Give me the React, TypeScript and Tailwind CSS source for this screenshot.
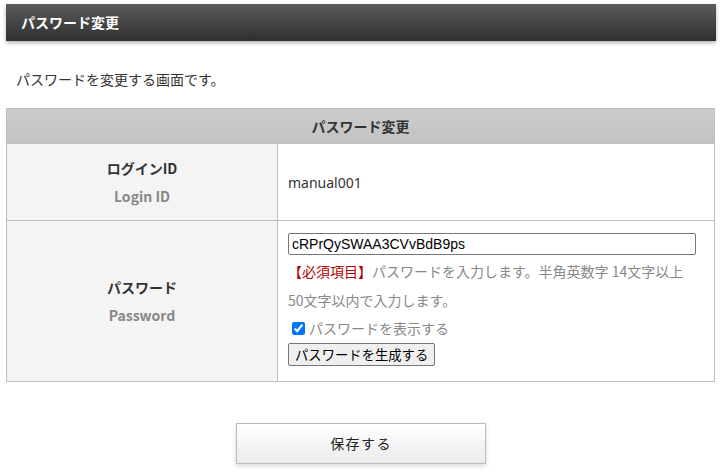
import { useState } from 'react';

const font = 'font-["Meiryo","Noto_Sans_CJK_JP","Noto_Sans",sans-serif]';

export default function App() {
  const [show, setShow] = useState(true);
  const [pw, setPw] = useState('cRPrQySWAA3CVvBdB9ps');

  return (
    <div className={`${font} min-h-[476px] bg-white px-[6px] pt-[4px] text-[14px] text-[#333]`}>
      {/* Page title bar */}
      <div className="flex h-[37px] items-center bg-gradient-to-b from-[#5c5c5c] to-[#2f2f2f] px-[15px] shadow-[0_2px_4px_rgba(0,0,0,0.3)]">
        <h1 className="text-[14px] font-bold text-white">パスワード変更</h1>
      </div>

      <p className="mt-[28px] pl-[10px] leading-[20px]">パスワードを変更する画面です。</p>

      {/* Form table */}
      <table className="mt-[19px] w-[709px] border-collapse border border-[#bdbdbd]">
        <thead>
          <tr>
            <th
              colSpan={2}
              className="h-[35px] border border-[#bdbdbd] bg-gradient-to-b from-[#cdcdcd] to-[#c2c2c2] text-center text-[14px] font-bold text-[#333]"
            >
              パスワード変更
            </th>
          </tr>
        </thead>
        <tbody>
          <tr className="h-[77px]">
            <th className="w-[271px] border border-[#bdbdbd] bg-[#f4f4f4] text-center font-bold leading-[28px]">
              <div className="text-[#333]">ログインID</div>
              <div className="text-[#888]">Login ID</div>
            </th>
            <td className="border border-[#bdbdbd] px-[10px] font-['Noto_Sans','Noto_Sans_CJK_JP',sans-serif] text-[#333]">
              manual001
            </td>
          </tr>
          <tr className="h-[161px]">
            <th className="border border-[#bdbdbd] bg-[#f4f4f4] text-center font-bold leading-[28px]">
              <div className="text-[#333]">パスワード</div>
              <div className="text-[#888]">Password</div>
            </th>
            <td className="border border-[#bdbdbd] px-[10px] pt-[12px] pb-[13px] align-top">
              <input
                type={show ? 'text' : 'password'}
                value={pw}
                onChange={(e) => setPw(e.target.value)}
                className="block h-[22px] w-[408px] rounded-[2px] border border-[#767676] px-[3px] font-['Liberation_Sans',sans-serif] text-[14px] text-black outline-none"
              />
              <p className="mt-[2px] leading-[29px] text-[#888]">
                <span className="text-[#b30000]">【必須項目】</span>パスワードを入力します。半角英数字 14文字以上
                <br />
                50文字以内で入力します。
              </p>
              <label className="flex h-[26px] items-center text-[#888]">
                <input
                  type="checkbox"
                  checked={show}
                  onChange={(e) => setShow(e.target.checked)}
                  className="mx-[4px] h-[13px] w-[13px] accent-[#0075ff]"
                />
                パスワードを表示する
              </label>
              <button className="mt-[2px] h-[23px] rounded-[2px] border border-[#767676] bg-[#efefef] px-[6px] text-[13.3333px] text-black">
                パスワードを生成する
              </button>
            </td>
          </tr>
        </tbody>
      </table>

      {/* Save */}
      <div className="mt-[41px] flex justify-center">
        <button className="h-[41px] w-[250px] border border-[#bbbbbb] bg-gradient-to-b from-white to-[#ebebeb] text-[14px] tracking-[0.1em] text-[#222] shadow-[0_2px_5px_rgba(0,0,0,0.15)]">
          保存する
        </button>
      </div>
    </div>
  );
}
